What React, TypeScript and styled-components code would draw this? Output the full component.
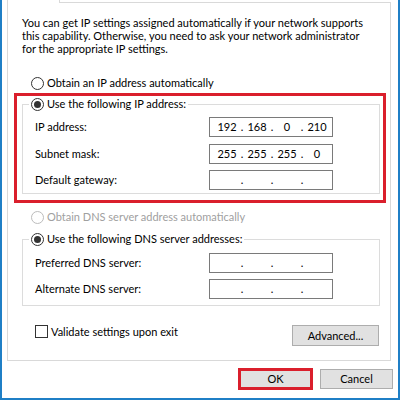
import React from 'react'
import styled, { createGlobalStyle } from 'styled-components'

const GlobalStyle = createGlobalStyle`
  html, body {
    margin: 0;
    padding: 0;
    background: #ffffff;
  }
  body {
    font-family: Lato, "Liberation Sans", sans-serif;
    font-size: 11px;
    line-height: 14px;
    color: #000000;
  }
  * {
    box-sizing: border-box;
  }
`

const Window = styled.div`
  width: 400px;
  height: 400px;
  background: #ffffff;
  border: 2px solid #1f7fc6;
  border-top: none;
  display: flex;
  flex-direction: column;
`

const TabStrip = styled.div`
  display: flex;
  height: 3px;
  margin-left: 5px;
  width: 384px;
`
const TabStub = styled.div`
  width: 53px;
  border-left: 1px solid #d9d9d9;
  border-right: 1px solid #d9d9d9;
`
const TabRest = styled.div`
  flex: 1;
  border-bottom: 1px solid #d9d9d9;
`

const Panel = styled.div`
  margin-left: 5px;
  width: 384px;
  height: 358px;
  flex-shrink: 0;
  border: 1px solid #d9d9d9;
  border-top: none;
  display: flex;
  flex-direction: column;
`

const Intro = styled.p`
  margin: 13px 0 0 14px;
  line-height: 13px;
  white-space: nowrap;
`

const Choice = styled.label<{ $disabled?: boolean; $top?: number; $left?: number }>`
  display: flex;
  align-items: center;
  gap: 3px;
  height: 14px;
  white-space: nowrap;
  margin-top: ${({ $top }) => $top ?? 0}px;
  margin-left: ${({ $left }) => $left ?? 0}px;
  color: ${({ $disabled }) => ($disabled ? '#a0a0a0' : '#000000')};
`

const Radio = styled.span<{ $checked?: boolean; $disabled?: boolean }>`
  width: 13px;
  height: 13px;
  flex-shrink: 0;
  border-radius: 50%;
  border: 1px solid ${({ $disabled }) => ($disabled ? '#bcbcbc' : '#333333')};
  background: #ffffff;
  display: flex;
  align-items: center;
  justify-content: center;
  &::after {
    content: '';
    width: 7px;
    height: 7px;
    border-radius: 50%;
    background: ${({ $checked }) => ($checked ? '#333333' : 'transparent')};
  }
`

const Highlight = styled.div`
  margin: 3px 0 0 6px;
  width: 372px;
  border: 3px solid #da1f2c;
  padding: 0 3px 6px 5px;
`

const GroupBox = styled.div<{ $top: number; $left?: number; $bottom: number }>`
  margin-top: ${({ $top }) => $top}px;
  margin-left: ${({ $left }) => $left ?? 0}px;
  width: 358px;
  border: 1px solid #dcdcdc;
  padding: 0 0 ${({ $bottom }) => $bottom}px 12px;
  display: flex;
  flex-direction: column;
`

const Legend = styled.div`
  display: flex;
  width: fit-content;
  height: 14px;
  margin: -8px 0 0 -6px;
  padding: 0 2px;
  background: #ffffff;
`

const Fields = styled.div<{ $top: number; $gap: number }>`
  display: flex;
  flex-direction: column;
  gap: ${({ $gap }) => $gap}px;
  margin-top: ${({ $top }) => $top}px;
`

const FieldRow = styled.div`
  display: flex;
  align-items: center;
  height: 20px;
`

const FieldLabel = styled.span`
  width: 174px;
  white-space: nowrap;
`

const IpBox = styled.div`
  display: flex;
  align-items: center;
  width: 124px;
  height: 20px;
  border: 1px solid #7a7a7a;
  padding-left: 5px;
  background: #ffffff;
`
const Octet = styled.span`
  width: 24px;
  text-align: center;
`
const Dot = styled.span`
  width: 6px;
  text-align: center;
`

const Footer = styled.div`
  display: flex;
  align-items: flex-start;
  justify-content: space-between;
  margin-top: 19px;
  padding: 0 11px 0 27px;
`

const CheckLabel = styled.label`
  display: flex;
  align-items: center;
  gap: 3px;
  height: 13px;
  white-space: nowrap;
`
const Check = styled.span`
  width: 13px;
  height: 13px;
  border: 1px solid #333333;
  background: #ffffff;
`

const Button = styled.button<{ $width: number; $height: number; $focus?: boolean }>`
  width: ${({ $width }) => $width}px;
  height: ${({ $height }) => $height}px;
  flex-shrink: 0;
  font: inherit;
  color: #000000;
  background: #e1e1e1;
  border: ${({ $focus }) => ($focus ? '3px solid #da1f2c' : '1px solid #adadad')};
  padding: 0;
`

const ButtonBar = styled.div`
  display: flex;
  align-items: center;
  justify-content: flex-end;
  gap: 7px;
  margin-top: 7px;
  padding-right: 5px;
`

const IpField = ({ parts }: { parts: string[] }) => (
  <IpBox>
    {parts.map((part, index) => (
      <React.Fragment key={`octet_${index}`}>
        {index > 0 && <Dot>.</Dot>}
        <Octet>{part}</Octet>
      </React.Fragment>
    ))}
  </IpBox>
)

const empty = ['', '', '', '']

export default function App() {
  return (
    <>
      <GlobalStyle />
      <Window>
        <TabStrip>
          <TabStub />
          <TabRest />
        </TabStrip>
        <Panel>
          <Intro>
            You can get IP settings assigned automatically if your network supports
            <br />
            this capability. Otherwise, you need to ask your network administrator
            <br />
            for the appropriate IP settings.
          </Intro>

          <Choice $top={21} $left={23}>
            <Radio />
            Obtain an IP address automatically
          </Choice>

          <Highlight>
            <GroupBox $top={8} $bottom={3}>
              <Legend>
                <Choice>
                  <Radio $checked />
                  Use the following IP address:
                </Choice>
              </Legend>
              <Fields $top={6} $gap={6.5}>
                <FieldRow>
                  <FieldLabel>IP address:</FieldLabel>
                  <IpField parts={['192', '168', '0', '210']} />
                </FieldRow>
                <FieldRow>
                  <FieldLabel>Subnet mask:</FieldLabel>
                  <IpField parts={['255', '255', '255', '0']} />
                </FieldRow>
                <FieldRow>
                  <FieldLabel>Default gateway:</FieldLabel>
                  <IpField parts={empty} />
                </FieldRow>
              </Fields>
            </GroupBox>
          </Highlight>

          <Choice $top={7} $left={23} $disabled>
            <Radio $disabled />
            Obtain DNS server address automatically
          </Choice>

          <GroupBox $top={15} $left={14} $bottom={6}>
            <Legend>
              <Choice>
                <Radio $checked />
                Use the following DNS server addresses:
              </Choice>
            </Legend>
            <Fields $top={7} $gap={6}>
              <FieldRow>
                <FieldLabel>Preferred DNS server:</FieldLabel>
                <IpField parts={empty} />
              </FieldRow>
              <FieldRow>
                <FieldLabel>Alternate DNS server:</FieldLabel>
                <IpField parts={empty} />
              </FieldRow>
            </Fields>
          </GroupBox>

          <Footer>
            <CheckLabel>
              <Check />
              Validate settings upon exit
            </CheckLabel>
            <Button $width={87} $height={21}>
              Advanced...
            </Button>
          </Footer>
        </Panel>

        <ButtonBar>
          <Button $width={75} $height={22} $focus>
            OK
          </Button>
          <Button $width={73} $height={20}>
            Cancel
          </Button>
        </ButtonBar>
      </Window>
    </>
  )
}
